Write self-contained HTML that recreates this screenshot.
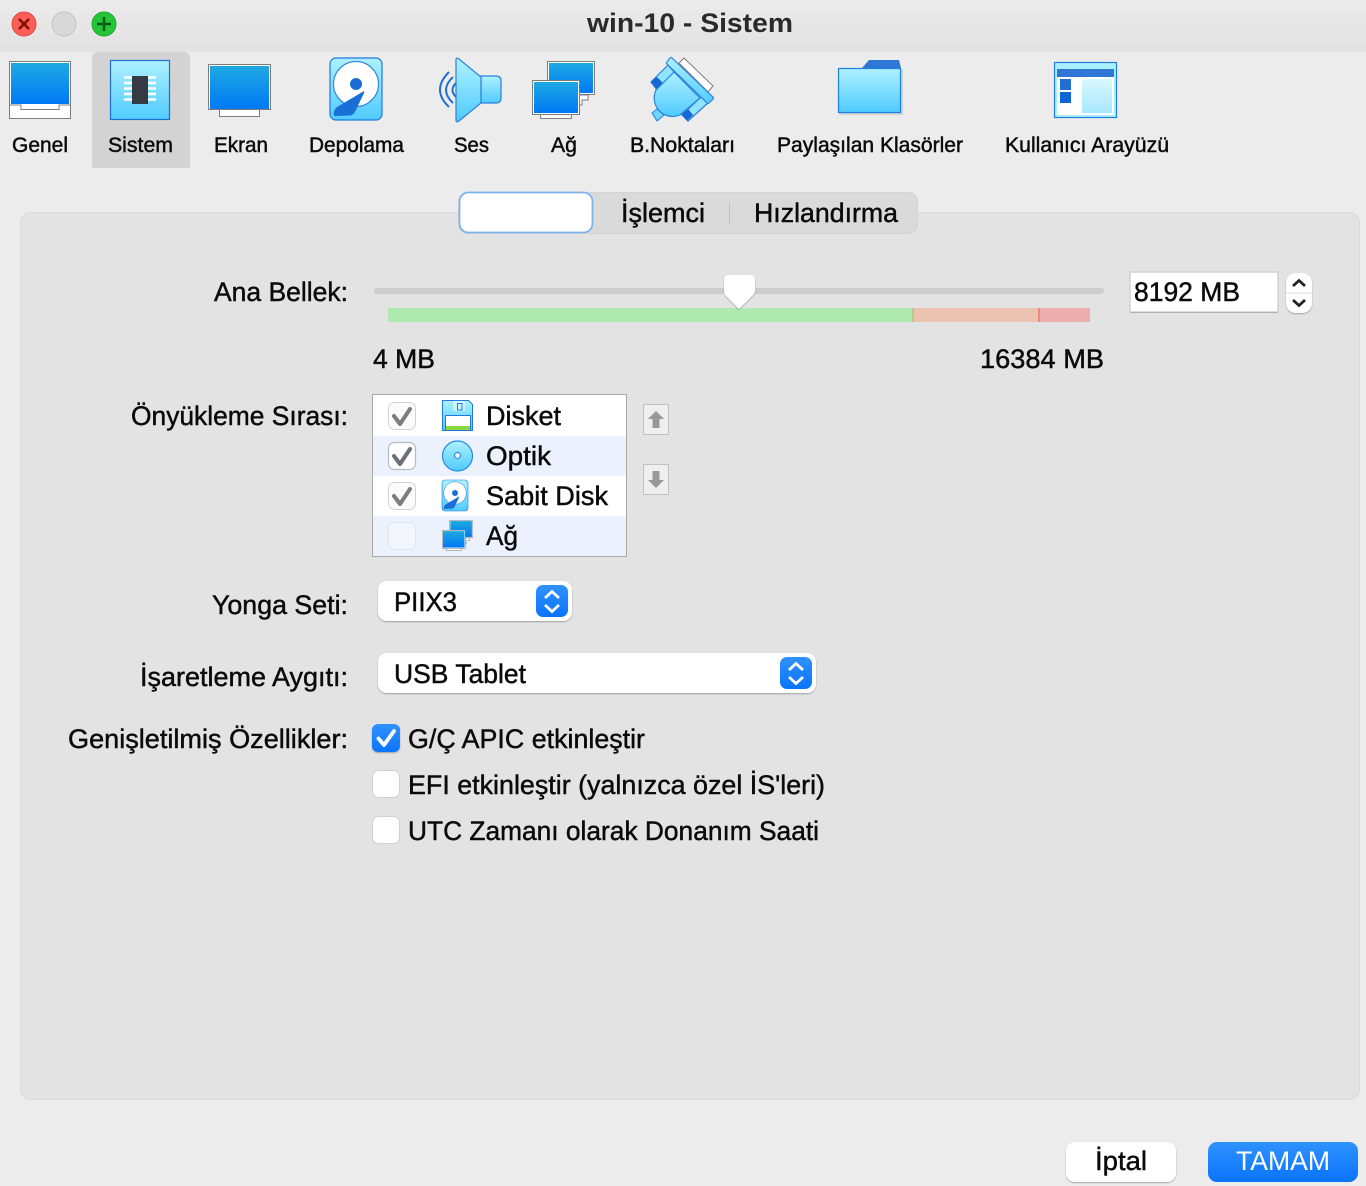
<!DOCTYPE html>
<html><head><meta charset="utf-8"><style>
html,body{margin:0;padding:0;background:#ececec;width:1366px;height:1186px;overflow:hidden}
svg{display:block}
text{font-family:"Liberation Sans",sans-serif;fill:#0a0a0a;stroke:#0a0a0a;stroke-width:.45px}
.t{font-size:21px}.f{font-size:27px}
</style></head><body>
<svg width="1366" height="1186" viewBox="0 0 1366 1186" xmlns="http://www.w3.org/2000/svg">
<defs>
<linearGradient id="sc" x1="0" y1="0" x2="0" y2="1"><stop offset="0" stop-color="#1fa9e2"/><stop offset="1" stop-color="#0079f5"/></linearGradient>
<linearGradient id="lb" x1="0" y1="0" x2="0" y2="1"><stop offset="0" stop-color="#aef1ff"/><stop offset="1" stop-color="#4fcbff"/></linearGradient>
<linearGradient id="pn" x1="0" y1="0" x2="0" y2="1"><stop offset="0" stop-color="#d8f8ff"/><stop offset="1" stop-color="#a8e8ff"/></linearGradient>
<linearGradient id="tb" x1="0" y1="0" x2="0" y2="1"><stop offset="0" stop-color="#ebebeb"/><stop offset="1" stop-color="#e2e2e2"/></linearGradient>
<linearGradient id="bb" x1="0" y1="0" x2="0" y2="1"><stop offset="0" stop-color="#2f92ff"/><stop offset="1" stop-color="#0a74fb"/></linearGradient>
<filter id="sh" x="-10%" y="-10%" width="120%" height="130%"><feDropShadow dx="0" dy="1" stdDeviation=".8" flood-color="#000" flood-opacity=".3"/></filter>
<g id="net">
<path d="M48 33h7v-0M40 34h16v5h-6v5h-10z" fill="#fff" stroke="#7d7d7d"/>
<rect x="15.500" y="0.500" width="47" height="33" fill="#fff" stroke="#7d7d7d"/>
<rect x="17" y="2" width="44" height="30" fill="url(#sc)"/>
<rect x="8.500" y="52" width="31" height="5.500" fill="#fff" stroke="#7d7d7d"/>
<rect x="0.500" y="19.500" width="47" height="34" fill="#fff" stroke="#7d7d7d"/>
<rect x="2" y="21" width="44" height="31" fill="url(#sc)"/>
</g>
<g id="disk">
<rect x="330" y="58" width="52" height="62" rx="6" fill="url(#lb)" stroke="#1e7ae0" stroke-width="1.200"/>
<circle cx="356" cy="84" r="22.500" fill="#fff" stroke="#1e7ae0" stroke-width="1"/>
<circle cx="356" cy="84" r="6" fill="#1a6fd6"/>
<path d="M364 91L337 107Q333 110 334 116L350 115.500Q353 115 355 112L364 93Z" fill="#1a6fd6"/>
</g>
</defs>

<rect width="1366" height="1186" fill="#ececec"/>
<rect width="1366" height="52" fill="url(#tb)"/>
<circle cx="24" cy="24" r="12" fill="#fc5d57" stroke="#e24a44"/>
<path d="M19 19l10 10M29 19l-10 10" stroke="#7a0d08" stroke-width="2.400"/>
<circle cx="64" cy="24" r="12" fill="#d8d8d8" stroke="#c4c4c4"/>
<circle cx="104" cy="24" r="12" fill="#25c537" stroke="#1ba82c"/>
<path d="M104 17v14M97 24h14" stroke="#0b5f14" stroke-width="2.600"/>
<text x="587" y="32" font-size="27" font-weight="700" textLength="206" lengthAdjust="spacingAndGlyphs" style="fill:#2a2a2a;stroke:none">win-10 - Sistem</text>

<path d="M92 168V58a6 6 0 0 1 6-6h86a6 6 0 0 1 6 6v110z" fill="#d3d3d3"/>

<!-- Genel -->
<rect x="9.500" y="61.500" width="61" height="57" fill="#fff" stroke="#7d7d7d"/>
<rect x="11" y="63" width="58" height="41" fill="url(#sc)"/>
<path d="M9 105h12v4.500h38V105h12" fill="none" stroke="#7d7d7d"/>
<!-- Sistem -->
<rect x="110.500" y="60.500" width="59" height="59" fill="url(#lb)" stroke="#1c6fd0" stroke-width="1.200"/>
<path d="M124 77.500h32M124 83h32M124 88.500h32M124 94h32M124 99.500h32" stroke="#fff" stroke-width="2.500"/>
<rect x="132" y="76" width="16" height="28" fill="#363a45"/>
<!-- Ekran -->
<rect x="219.500" y="108" width="40" height="8.500" fill="#fff" stroke="#7d7d7d"/>
<rect x="208.500" y="64.500" width="62" height="45" fill="#fff" stroke="#7d7d7d"/>
<rect x="210" y="66" width="59" height="43" fill="url(#sc)"/>
<!-- Depolama -->
<use href="#disk"/>
<!-- Ses -->
<path d="M449 72Q431 90 449 107M453 77Q439 90 453 103M456 83Q449 90 456 97" fill="none" stroke="#1e6fd0" stroke-width="2"/>
<path d="M481 76h15q5 0 5 5v17q0 5-5 5h-15z" fill="url(#lb)" stroke="#2c80dd" stroke-width="1.200"/>
<path d="M456 60q0-3 3-1l22 18v26l-22 18q-3 2-3-1z" fill="url(#lb)" stroke="#2c80dd" stroke-width="1.200"/>
<!-- Ag -->
<use href="#net" x="532" y="61"/>
<!-- B.Noktalari -->
<path d="M684 58l29 28-5 6-29-29z" fill="#fff" stroke="#7d7d7d"/>
<path d="M652 113l5-4 7 6-7 6z" fill="#6fd6ff" stroke="#2c80dd"/>
<path d="M651 82l17-17 7 8-18 17zM682 115l19-18 7 6-20 18z" fill="#8fe4ff" stroke="#2c80dd" stroke-width="1.200"/>
<path d="M651 82l6-5 6 6-6 6zM682 114l6-5 5 6-6 6z" fill="#1668d2"/>
<path d="M656 90L674 72L700 98L680 115A18.500 18.500 0 0 1 656 90Z" fill="url(#lb)" stroke="#2c80dd" stroke-width="1.200"/>
<path d="M672 58l41 39q1 1 0 2l-4 4q-1 1-2 0l-40-39q-1-1 0-2l3-4q1-1 2 0z" fill="url(#lb)" stroke="#2c80dd" stroke-width="1.200"/>
<!-- Folder -->
<path d="M862 68l7-8h30l2 8z" fill="#2f77d4"/>
<rect x="838.500" y="68.500" width="62" height="44" fill="url(#lb)" stroke="#1e80e0" stroke-width="1.200"/>
<path d="M839 114h63V69" fill="none" stroke="#bbb"/>
<!-- UI -->
<rect x="1054.500" y="62.500" width="62" height="55" fill="#a8f0ff" stroke="#1e80e0" stroke-width="1.200"/>
<rect x="1057" y="77" width="57" height="38" fill="#fff"/>
<rect x="1057" y="69" width="57" height="8" fill="#2f77d4"/>
<rect x="1060" y="79" width="11" height="11" fill="#1f70d0"/>
<rect x="1060" y="92" width="11" height="11" fill="#0b66d4"/>
<rect x="1082" y="79" width="30" height="34" fill="url(#pn)"/>

<text class="t" x="12" y="152" textLength="56" lengthAdjust="spacingAndGlyphs">Genel</text>
<text class="t" x="108" y="152" textLength="65" lengthAdjust="spacingAndGlyphs">Sistem</text>
<text class="t" x="214" y="152" textLength="54" lengthAdjust="spacingAndGlyphs">Ekran</text>
<text class="t" x="309" y="152" textLength="95" lengthAdjust="spacingAndGlyphs">Depolama</text>
<text class="t" x="454" y="152" textLength="35" lengthAdjust="spacingAndGlyphs">Ses</text>
<text class="t" x="551" y="152" textLength="26" lengthAdjust="spacingAndGlyphs">Ağ</text>
<text class="t" x="630" y="152" textLength="105" lengthAdjust="spacingAndGlyphs">B.Noktaları</text>
<text class="t" x="777" y="152" textLength="186" lengthAdjust="spacingAndGlyphs">Paylaşılan Klasörler</text>
<text class="t" x="1005" y="152" textLength="164" lengthAdjust="spacingAndGlyphs">Kullanıcı Arayüzü</text>

<!-- Panel -->
<rect x="20.500" y="212.500" width="1339" height="887" rx="10" fill="#e3e3e3" stroke="#dadada"/>
<!-- Tabs -->
<rect x="458.500" y="192.500" width="459" height="41" rx="9" fill="#dadada" stroke="#d4d4d4"/>
<rect x="459.500" y="192.500" width="133" height="40" rx="9" fill="#fff" stroke="#7eb4ec" stroke-width="1.800"/>
<rect x="729" y="202" width="1" height="22" fill="#c2c2c2"/>
<text class="f" x="621" y="222" textLength="84" lengthAdjust="spacingAndGlyphs">İşlemci</text>
<text class="f" x="754" y="222" textLength="144" lengthAdjust="spacingAndGlyphs">Hızlandırma</text>

<!-- Labels -->
<text class="f" x="214" y="301" textLength="134" lengthAdjust="spacingAndGlyphs">Ana Bellek:</text>
<text class="f" x="131" y="425" textLength="217" lengthAdjust="spacingAndGlyphs">Önyükleme Sırası:</text>
<text class="f" x="212" y="614" textLength="136" lengthAdjust="spacingAndGlyphs">Yonga Seti:</text>
<text class="f" x="140" y="686" textLength="208" lengthAdjust="spacingAndGlyphs">İşaretleme Aygıtı:</text>
<text class="f" x="68" y="748" textLength="280" lengthAdjust="spacingAndGlyphs">Genişletilmiş Özellikler:</text>

<!-- Slider -->
<rect x="374" y="288" width="730" height="6" rx="3" fill="#cdcdcd"/>
<rect x="388" y="308" width="524" height="14" fill="#aeeab0"/>
<rect x="912" y="308" width="2" height="14" fill="#b9c98e"/>
<rect x="914" y="308" width="124" height="14" fill="#ecc2b0"/>
<rect x="1038" y="308" width="2" height="14" fill="#f08a78"/>
<rect x="1040" y="308" width="50" height="14" fill="#ebadad"/>
<path d="M724 280q0-5 5-5h21q5 0 5 5v11q0 2-2 4l-14 14-14-14q-1-2-1-4z" fill="#fff" filter="url(#sh)"/>
<text class="f" x="373" y="368" textLength="62" lengthAdjust="spacingAndGlyphs">4 MB</text>
<text class="f" x="980" y="368" textLength="124" lengthAdjust="spacingAndGlyphs">16384 MB</text>
<!-- Input -->
<rect x="1130" y="272" width="148" height="40" fill="#fff" stroke="#d2d2d2" stroke-width="1.500"/>
<path d="M1130 312.500h148" stroke="#b0b0b0"/>
<text class="f" x="1134" y="301" textLength="106" lengthAdjust="spacingAndGlyphs">8192 MB</text>
<rect x="1286" y="273" width="26" height="40" rx="10" fill="#fff" filter="url(#sh)"/>
<path d="M1286 293h26" stroke="#dcdcdc"/>
<path d="M1293 286l6-5.500 6 5.500M1293 300l6 5.500 6-5.500" fill="none" stroke="#222" stroke-width="2.800"/>

<!-- Boot list -->
<rect x="372.500" y="394.500" width="254" height="162" fill="#fff" stroke="#a8a8a8"/>
<rect x="373" y="436" width="253" height="40" fill="#ebf2fd"/>
<rect x="373" y="516" width="253" height="40" fill="#ebf2fd"/>
<rect x="388.500" y="402.500" width="27" height="27" rx="6" fill="#fbfbfb" stroke="#d3d3d3"/>
<rect x="388.500" y="442.500" width="27" height="27" rx="6" fill="#fff" stroke="#b8bbc2" stroke-width="1.200"/>
<rect x="388.500" y="482.500" width="27" height="27" rx="6" fill="#fbfbfb" stroke="#d3d3d3"/>
<rect x="388.500" y="522.500" width="27" height="27" rx="6" fill="#f3f6fd" stroke="#e2e5ec"/>
<g fill="none" stroke-width="4" stroke-linecap="round" stroke-linejoin="round">
<path d="M394 416l6 8 10-15" stroke="#7d7d7d"/>
<path d="M394 456l6 8 10-15" stroke="#6e7077"/>
<path d="M394 496l6 8 10-15" stroke="#7d7d7d"/>
</g>
<!-- Floppy -->
<path d="M442.500 400.500h26l4 4v26h-30z" fill="url(#lb)" stroke="#1e7ae0"/>
<rect x="453" y="401" width="12" height="10" fill="#fff" opacity=".5"/>
<rect x="457.500" y="403.500" width="4.500" height="6.500" fill="none" stroke="#1e7ae0"/>
<rect x="445.500" y="415.500" width="25" height="15" fill="#fff" stroke="#1e7ae0"/>
<rect x="446" y="426" width="24" height="4" fill="#8ad83e"/>
<!-- Optical -->
<circle cx="457.500" cy="456" r="15" fill="url(#lb)" stroke="#2c8ae6" stroke-width="1.200"/>
<circle cx="457.500" cy="455.500" r="3" fill="#fff" stroke="#3388d8" stroke-width="1.200"/>
<!-- HDD -->
<g transform="translate(442 480) scale(.5) translate(-330 -58)"><use href="#disk"/></g>
<!-- Net -->
<g transform="translate(442 520) scale(.49 .53)"><use href="#net"/></g>

<text class="f" x="486" y="425" textLength="75" lengthAdjust="spacingAndGlyphs">Disket</text>
<text class="f" x="486" y="465" textLength="65" lengthAdjust="spacingAndGlyphs">Optik</text>
<text class="f" x="486" y="505" textLength="122" lengthAdjust="spacingAndGlyphs">Sabit Disk</text>
<text class="f" x="486" y="545" textLength="32" lengthAdjust="spacingAndGlyphs">Ağ</text>

<!-- Arrows -->
<rect x="643.500" y="404.500" width="25" height="30" fill="#efefef" stroke="#c0c0c0"/>
<path d="M656 411l8 8h-4.500v9h-7v-9H648z" fill="#989898"/>
<rect x="643.500" y="464.500" width="25" height="30" fill="#efefef" stroke="#c0c0c0"/>
<path d="M656 488l8-8h-4.500v-9h-7v9H648z" fill="#989898"/>

<!-- Selects -->
<rect x="378" y="581" width="194" height="40" rx="9" fill="#fff" filter="url(#sh)"/>
<rect x="536" y="585" width="32" height="32" rx="7" fill="url(#bb)"/>
<path d="M545 598l7-6.500 7 6.500M545 605l7 6.500 7-6.500" fill="none" stroke="#fff" stroke-width="2.800"/>
<text class="f" x="394" y="611" textLength="63" lengthAdjust="spacingAndGlyphs">PIIX3</text>
<rect x="378" y="653" width="438" height="40" rx="9" fill="#fff" filter="url(#sh)"/>
<rect x="780" y="657" width="32" height="32" rx="7" fill="url(#bb)"/>
<path d="M789 670l7-6.500 7 6.500M789 677l7 6.500 7-6.500" fill="none" stroke="#fff" stroke-width="2.800"/>
<text class="f" x="394" y="683" textLength="132" lengthAdjust="spacingAndGlyphs">USB Tablet</text>

<!-- Checkboxes -->
<rect x="372" y="724" width="28" height="28" rx="6" fill="url(#bb)" filter="url(#sh)"/>
<path d="M378.500 738.500l5.500 6.500 10-14" fill="none" stroke="#fff" stroke-width="3.800" stroke-linecap="round" stroke-linejoin="round"/>
<rect x="372.500" y="770.500" width="27" height="27" rx="6" fill="#fff" stroke="#d0d0d0"/>
<rect x="372.500" y="816.500" width="27" height="27" rx="6" fill="#fff" stroke="#d0d0d0"/>
<text class="f" x="408" y="748" textLength="237" lengthAdjust="spacingAndGlyphs">G/Ç APIC etkinleştir</text>
<text class="f" x="408" y="794" textLength="417" lengthAdjust="spacingAndGlyphs">EFI etkinleştir (yalnızca özel İS'leri)</text>
<text class="f" x="408" y="840" textLength="411" lengthAdjust="spacingAndGlyphs">UTC Zamanı olarak Donanım Saati</text>

<!-- Buttons -->
<rect x="1066" y="1142" width="110" height="40" rx="9" fill="#fff" filter="url(#sh)"/>
<text class="f" x="1095" y="1170" textLength="52" lengthAdjust="spacingAndGlyphs">İptal</text>
<rect x="1208" y="1142" width="150" height="40" rx="9" fill="url(#bb)"/>
<text class="f" x="1236" y="1170" textLength="94" lengthAdjust="spacingAndGlyphs" style="fill:#fff;stroke:none">TAMAM</text>
</svg>
</body></html>
